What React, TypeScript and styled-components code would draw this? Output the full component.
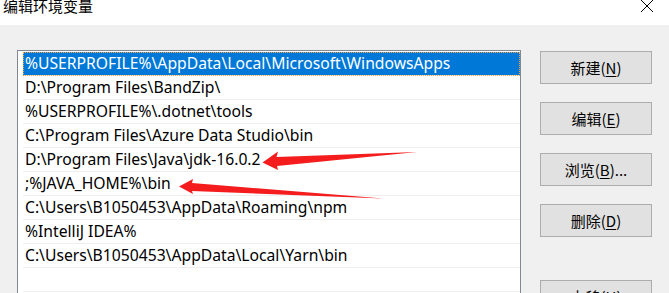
import styled, { createGlobalStyle } from 'styled-components'

const paths = [
  '%USERPROFILE%\\AppData\\Local\\Microsoft\\WindowsApps',
  'D:\\Program Files\\BandZip\\',
  '%USERPROFILE%\\.dotnet\\tools',
  'C:\\Program Files\\Azure Data Studio\\bin',
  'D:\\Program Files\\Java\\jdk-16.0.2',
  ';%JAVA_HOME%\\bin',
  'C:\\Users\\B1050453\\AppData\\Roaming\\npm',
  '%IntelliJ IDEA%',
  'C:\\Users\\B1050453\\AppData\\Local\\Yarn\\bin',
  '',
  '',
]

const buttons = [
  { label: '新建', key: 'N' },
  { label: '编辑', key: 'E' },
  { label: '浏览', key: 'B', tail: '...' },
  { label: '删除', key: 'D' },
]

export default function App() {
  return (
    <Window>
      <GlobalStyle />
      <TitleBar>
        <Title>编辑环境变量</Title>
        <CloseIcon width="14" height="14" viewBox="0 0 14 14">
          <path d="M1 0 L13 12 M13 0 L1 12" stroke="#000" strokeWidth="1" fill="none" />
        </CloseIcon>
      </TitleBar>
      <Body>
        <ListBox>
          {paths.map((p, i) => (
            <Row key={i} selected={i === 0}>
              {p}
            </Row>
          ))}
        </ListBox>
        <ButtonColumn>
          {buttons.map((b) => (
            <Button key={b.key}>
              {b.label}(<u>{b.key}</u>){b.tail}
            </Button>
          ))}
          <Button $spaced>
            上移(<u>U</u>)
          </Button>
        </ButtonColumn>
      </Body>
      <Arrows width="669" height="293" viewBox="0 0 669 293">
        <path d="M262.5 162.5 L278 151.5 L276.5 157 L417 152 L277 166 L278 170 Z" fill="#f41c1c" />
        <path d="M179 186.5 L193 179 L192 183 L383 198.5 L192 191 L193 194 Z" fill="#f41c1c" />
      </Arrows>
    </Window>
  )
}

const GlobalStyle = createGlobalStyle`
  html, body {
    margin: 0;
    padding: 0;
    background: #f0f0f0;
    overflow: hidden;
  }
  body {
    font-family: "Noto Sans", "Noto Sans CJK SC", sans-serif;
  }
`

const Window = styled.div`
  position: relative;
  width: 669px;
  height: 293px;
  overflow: hidden;
  background: #f0f0f0;
`

const TitleBar = styled.div`
  display: flex;
  justify-content: space-between;
  align-items: flex-start;
  height: 25px;
  background: #ffffff;
  padding: 0 15px 0 3px;
  box-sizing: border-box;
  overflow: hidden;
`

const Title = styled.div`
  font-family: "Noto Sans CJK SC", sans-serif;
  font-size: 15px;
  line-height: 15px;
  margin-top: -2px;
  color: #000;
`

const CloseIcon = styled.svg`
  display: block;
`

const Body = styled.div`
  display: flex;
  align-items: flex-start;
  padding: 25px 0 0 17px;
  gap: 19px;
`

const ListBox = styled.div`
  width: 504px;
  height: 300px;
  box-sizing: border-box;
  border: 1px solid #828790;
  background: #ffffff;
  padding: 1px 0 0 5px;
`

const Row = styled.div<{ selected?: boolean }>`
  height: 24px;
  box-sizing: border-box;
  border-bottom: 1px solid #eeeeee;
  padding-left: 2px;
  font-size: 15.7px;
  line-height: 23px;
  white-space: nowrap;
  overflow: hidden;
  color: ${({ selected }) => (selected ? '#ffffff' : '#000000')};
  background: ${({ selected }) => (selected ? '#0078d7' : 'transparent')};
  outline: ${({ selected }) => (selected ? '1px dotted #f7a64a' : 'none')};
  outline-offset: -1px;
`

const ButtonColumn = styled.div`
  display: flex;
  flex-direction: column;
  gap: 18px;
  padding-top: 1px;
`

const Button = styled.div<{ $spaced?: boolean }>`
  width: 112px;
  height: 33px;
  box-sizing: border-box;
  border: 1px solid #adadad;
  background: #e1e1e1;
  display: flex;
  align-items: center;
  justify-content: center;
  font-family: "Noto Sans CJK SC", sans-serif;
  font-size: 15px;
  color: #000;
  margin-top: ${({ $spaced }) => ($spaced ? '25px' : '0')};

  u {
    text-decoration-thickness: 1px;
    text-underline-offset: 2px;
  }
`

const Arrows = styled.svg`
  position: absolute;
  top: 0;
  left: 0;
  pointer-events: none;
`
